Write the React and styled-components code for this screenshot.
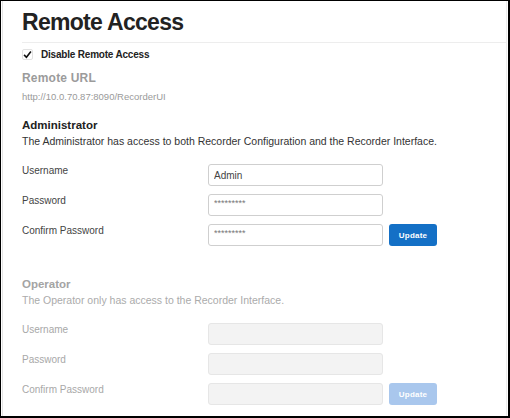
import React from "react";
import styled, { createGlobalStyle } from "styled-components";

const GlobalStyle = createGlobalStyle`
  html, body {
    margin: 0;
    padding: 0;
    background: #fff;
  }
  body {
    font-family: "Liberation Sans", Arial, sans-serif;
  }
`;

const accounts = [
  {
    title: "Administrator",
    text: "The Administrator has access to both Recorder Configuration and the Recorder Interface.",
    disabled: false,
    values: ["Admin", "*********", "*********"],
  },
  {
    title: "Operator",
    text: "The Operator only has access to the Recorder Interface.",
    disabled: true,
    values: ["", "", ""],
  },
];

const fields = ["Username", "Password", "Confirm Password"];

const App = () => {
  return (
    <>
      <GlobalStyle />
      <Frame>
        <Panel>
          <Header>
            <Title>Remote Access</Title>
          </Header>
          <CheckRow>
            <CheckBox>
              <svg width="9" height="9" viewBox="0 0 10 10">
                <path d="M1.2 5.4 L3.8 8 L8.8 1.6" fill="none" stroke="#111" strokeWidth="1.8" />
              </svg>
            </CheckBox>
            <CheckLabel>Disable Remote Access</CheckLabel>
          </CheckRow>
          <SubTitle>Remote URL</SubTitle>
          <Url>http://10.0.70.87:8090/RecorderUI</Url>

          {accounts.map((acc, i) => (
            <Section key={acc.title} $first={i === 0}>
              <SectionTitle $disabled={acc.disabled}>{acc.title}</SectionTitle>
              <SectionText $disabled={acc.disabled}>{acc.text}</SectionText>
              <Fields>
                {fields.map((f, j) => (
                  <Row key={f}>
                    <Label $disabled={acc.disabled}>{f}</Label>
                    <Input
                      readOnly
                      disabled={acc.disabled}
                      value={acc.values[j]}
                      $secret={j > 0}
                    />
                    {j === 2 && <Button disabled={acc.disabled}>Update</Button>}
                  </Row>
                ))}
              </Fields>
            </Section>
          ))}
        </Panel>
      </Frame>
    </>
  );
};

export default App;

const Frame = styled.div`
  width: 510px;
  height: 418px;
  box-sizing: border-box;
  border-style: solid;
  border-color: #000;
  border-width: 1px 2px 2px 1px;
  padding: 0 1px 0 1px;
  overflow: hidden;
`;

const Panel = styled.div`
  height: 100%;
  box-sizing: border-box;
  border-left: 1px solid #e4e4e4;
  border-right: 1px solid #ececec;
  padding-left: 19px;
`;

const Header = styled.div`
  padding: 7px 0 6px;
  border-bottom: 1px solid #ededed;
`;

const Title = styled.h1`
  margin: 0;
  font-size: 23px;
  line-height: 28px;
  font-weight: bold;
  color: #222;
  letter-spacing: -0.7px;
`;

const CheckRow = styled.div`
  display: flex;
  align-items: center;
  height: 13px;
  margin-top: 5px;
`;

const CheckBox = styled.span`
  width: 11px;
  height: 11px;
  box-sizing: border-box;
  border: 1px solid #e2e2e2;
  border-radius: 2px;
  display: flex;
  align-items: center;
  justify-content: center;
  margin-right: 8px;
`;

const CheckLabel = styled.span`
  font-size: 10px;
  font-weight: bold;
  color: #222;
  letter-spacing: -0.2px;
`;

const SubTitle = styled.div`
  margin-top: 9px;
  font-size: 12px;
  line-height: 16px;
  font-weight: bold;
  color: #9b9b9b;
  letter-spacing: 0.2px;
`;

const Url = styled.div`
  margin-top: 4px;
  font-size: 9.5px;
  line-height: 14px;
  color: #9a9a9a;
`;

const Section = styled.div`
  margin-top: ${(p) => (p.$first ? "14px" : "31px")};
`;

const SectionTitle = styled.div`
  font-size: 11.5px;
  line-height: 14px;
  font-weight: bold;
  color: ${(p) => (p.$disabled ? "#a4a4a4" : "#222")};
`;

const SectionText = styled.div`
  margin-top: 2px;
  font-size: 10.5px;
  line-height: 14px;
  color: ${(p) => (p.$disabled ? "#ababab" : "#333")};
`;

const Fields = styled.div`
  display: flex;
  flex-direction: column;
  gap: 8px;
  margin-top: 16px;
`;

const Row = styled.div`
  display: flex;
  align-items: flex-start;
  height: 22px;
`;

const Label = styled.div`
  width: 186px;
  font-size: 10px;
  line-height: 14px;
  color: ${(p) => (p.$disabled ? "#a8a8a8" : "#444")};
`;

const Input = styled.input`
  width: 175px;
  height: 22px;
  box-sizing: border-box;
  border: 1px solid ${(p) => (p.disabled ? "#e6e6e6" : "#cfcfcf")};
  border-radius: 3px;
  background: ${(p) => (p.disabled ? "#f3f3f3" : "#fff")};
  padding: ${(p) => (p.$secret ? "0 5px 4px" : "0 5px")};
  font-family: "Liberation Sans", Arial, sans-serif;
  font-size: ${(p) => (p.$secret ? "9px" : "10px")};
  color: ${(p) => (p.$secret ? "#777" : "#444")};
  outline: none;
`;

const Button = styled.button`
  margin-left: 6px;
  width: 48px;
  height: 22px;
  border: none;
  border-radius: 3px;
  background: ${(p) => (p.disabled ? "#a9c7ed" : "#1470c6")};
  color: #fff;
  font-family: "Liberation Sans", Arial, sans-serif;
  font-size: 8px;
  font-weight: bold;
  letter-spacing: 0.2px;
  padding: 0;
`;
